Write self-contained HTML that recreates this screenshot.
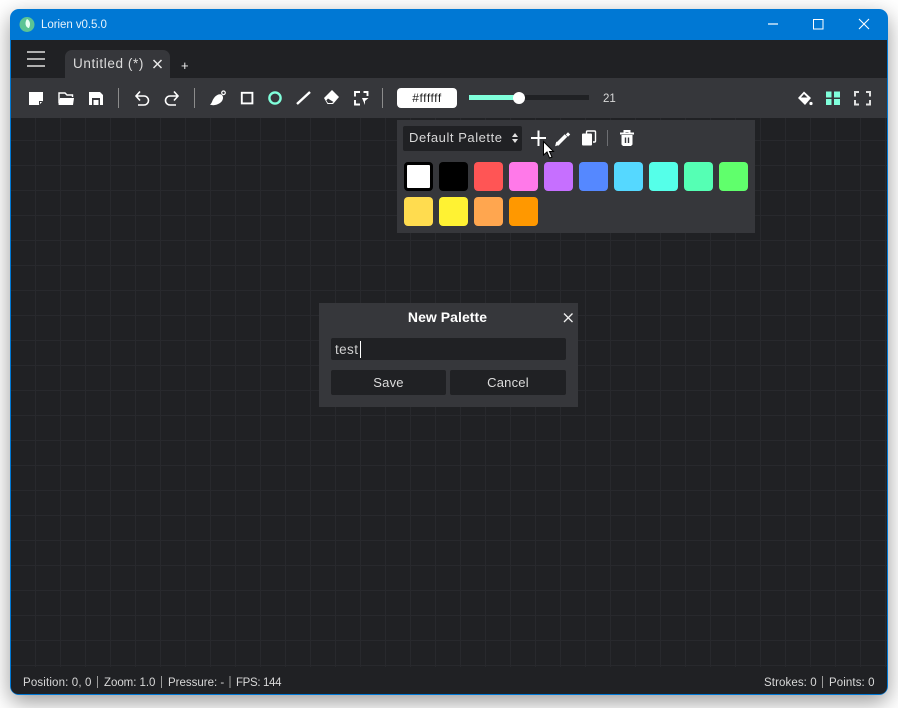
<!DOCTYPE html>
<html><head><meta charset="utf-8"><style>
html,body{margin:0;padding:0;width:898px;height:708px;overflow:hidden;background:#fff;font-family:"Liberation Sans",sans-serif}
.a{position:absolute;white-space:nowrap}
#win{position:absolute;left:10px;top:9px;width:878px;height:686px;border-radius:9px;box-shadow:0 7px 22px rgba(0,0,0,.4);background:#0078d4}
#in{position:absolute;left:11px;top:40px;width:876px;height:654px;background:#202124;border-radius:0 0 7px 7px;overflow:hidden}
.t{color:#d8d8d8;font-size:11.5px;line-height:14px}
.sw{position:absolute;width:29px;height:29px;border-radius:4px}
</style></head><body>
<div id="win"></div>
<div id="in"></div>
<svg class="a" style="left:11px;top:118px" width="876" height="549"><defs><pattern id="g" x="24" y="-3" width="25" height="25" patternUnits="userSpaceOnUse"><path d="M.5 0V25M0 .5H25" stroke="#28292d" fill="none"/></pattern></defs><rect width="876" height="549" fill="url(#g)"/></svg>
<div class="a" style="left:11px;top:78px;width:876px;height:40px;background:#36373b"></div>
<div class="a" style="left:65px;top:50px;width:105px;height:28px;background:#36373b;border-radius:7px 7px 0 0"></div>
<div class="a" style="left:41px;top:17px;color:#e6f2fb;font-size:11.5px;line-height:16px;letter-spacing:-.05px">Lorien v0.5.0</div>
<div class="a" style="left:73px;top:55px;color:#dcdcdc;font-size:13.5px;line-height:17px;letter-spacing:.6px">Untitled (*)</div>
<div class="a" style="left:181px;top:58px;color:#f0f0f0;font-size:13px;line-height:16px">+</div>
<div class="a" style="left:397px;top:88px;width:60px;height:20px;background:#fff;border-radius:4px;color:#222;font-size:12px;line-height:20px;text-align:center;letter-spacing:.55px">#ffffff</div>
<div class="a" style="left:469px;top:95px;width:120px;height:5px;background:#202124"></div>
<div class="a" style="left:469px;top:95px;width:50px;height:5px;background:#80ffdb"></div>
<div class="a" style="left:513px;top:92px;width:12px;height:12px;background:#fff;border-radius:50%"></div>
<div class="a t" style="left:603px;top:92px">21</div>
<div class="a" style="left:397px;top:120px;width:358px;height:113px;background:#36373b"></div>
<div class="a" style="left:403px;top:126px;width:119px;height:25px;background:#202124;border-radius:2px"></div>
<div class="a" style="left:409px;top:130px;color:#d8d8d8;font-size:13px;line-height:16px;letter-spacing:.55px">Default Palette</div>
<div class="sw" style="left:404px;top:162px;background:#fff;border:3px solid #000;box-sizing:border-box"></div>
<div class="sw" style="left:439px;top:162px;background:#000"></div>
<div class="sw" style="left:474px;top:162px;background:#ff5555"></div>
<div class="sw" style="left:509px;top:162px;background:#ff79e9"></div>
<div class="sw" style="left:544px;top:162px;background:#c66fff"></div>
<div class="sw" style="left:579px;top:162px;background:#5588ff"></div>
<div class="sw" style="left:614px;top:162px;background:#55d8ff"></div>
<div class="sw" style="left:649px;top:162px;background:#55ffe9"></div>
<div class="sw" style="left:684px;top:162px;background:#55ffb4"></div>
<div class="sw" style="left:719px;top:162px;background:#60ff6c"></div>
<div class="sw" style="left:404px;top:197px;background:#ffdc4f"></div>
<div class="sw" style="left:439px;top:197px;background:#fff233"></div>
<div class="sw" style="left:474px;top:197px;background:#ffa64f"></div>
<div class="sw" style="left:509px;top:197px;background:#ff9800"></div>
<div class="a" style="left:319px;top:303px;width:259px;height:104px;background:#36373b"></div>
<div class="a" style="left:318px;top:308px;width:259px;text-align:center;color:#fff;font-size:14px;line-height:18px;font-weight:bold;letter-spacing:.05px">New Palette</div>
<div class="a" style="left:331px;top:338px;width:235px;height:22px;background:#202124;border-radius:2px"></div>
<div class="a" style="left:335px;top:341px;color:#cfcfcf;font-size:13.5px;line-height:17px;letter-spacing:.4px">test</div>
<div class="a" style="left:360px;top:341px;width:1px;height:17px;background:#fff"></div>
<div class="a" style="left:331px;top:370px;width:115px;height:25px;background:#202124;color:#dcdcdc;font-size:13px;line-height:25px;text-align:center;border-radius:2px;letter-spacing:.2px">Save</div>
<div class="a" style="left:450px;top:370px;width:116px;height:25px;background:#202124;color:#dcdcdc;font-size:13px;line-height:25px;text-align:center;border-radius:2px;letter-spacing:.2px">Cancel</div>
<div class="a t" style="left:23px;top:676px;letter-spacing:.15px">Position: 0, 0</div>
<div class="a t" style="left:104px;top:676px;letter-spacing:-.05px">Zoom: 1.0</div>
<div class="a t" style="left:168px;top:676px">Pressure: -</div>
<div class="a t" style="left:236px;top:676px;letter-spacing:-.35px">FPS: 144</div>
<div class="a t" style="left:764px;top:676px;letter-spacing:.1px">Strokes: 0</div>
<div class="a t" style="left:829px;top:676px;letter-spacing:.1px">Points: 0</div>
<svg class="a" style="left:0;top:0" width="898" height="708" fill="none">
<circle cx="27" cy="24.500" r="7.500" fill="#5cc494"/><path d="M27 19c3 1.500 4 5 2 9-3 0-5-5-2-9z" fill="#e6fff2"/>
<path d="M768 24H778" stroke="#fff" stroke-width="1.200"/><rect x="813.500" y="19.500" width="9.500" height="9.500" stroke="#fff"/><path d="M859 19l10 10M869 19L859 29" stroke="#fff" stroke-width="1.100"/>
<path d="M27 52H45M27 59H45M27 66H45" stroke="#c4c4c4" stroke-width="1.800"/>
<path d="M153.500 60l8 8M161.500 60l-8 8" stroke="#e8e8e8" stroke-width="1.500"/>
<path d="M29 92H43V101L39 105H29Z" fill="#fff"/><path d="M39 101h4l-4 4z" fill="#36373b"/><path d="M40 102h2l-2 2z" fill="#fff"/>
<path d="M59 103.500V93H65L67 95H72.500V97" stroke="#fff" stroke-width="1.400"/><path d="M60 98H74L73 105H58.500Z" fill="#fff"/>
<path d="M89 92H100L103 95V105H89Z" fill="#fff"/><rect x="92" y="98" width="8" height="7" fill="#36373b"/><rect x="93.500" y="100" width="5" height="5" fill="#fff"/>
<path d="M118.500 88V108M194.500 88V108M382.500 88V108" stroke="#8c8c8c"/>
<path d="M140 91.500l-4 4.500 4 4.500M136 96H144a4.500 4.500 0 0 1 0 9H138" stroke="#fff" stroke-width="1.600"/>
<path d="M174 91.500l4 4.500-4 4.500M178 96H170a4.500 4.500 0 0 0 0 9H176" stroke="#fff" stroke-width="1.600"/>
<path d="M210 104.500c2-1 2-4 4-6.500 2-3 6-5 8-3 2 2 1 6-2 8-3 2-7 3-10 1.500z" fill="#fff"/><circle cx="223.500" cy="92.800" r="1.800" stroke="#fff" stroke-width="1.200"/>
<rect x="241.800" y="92.800" width="10.600" height="10.600" stroke="#fff" stroke-width="1.900"/>
<circle cx="275" cy="98" r="5.600" stroke="#80ffdb" stroke-width="2.400"/>
<path d="M297 104L310 92" stroke="#fff" stroke-width="2.400"/>
<path d="M324 98L332 90L339 97L333 104H327.500Z" fill="#fff"/><path d="M328 98.500L333.500 102L332 103H328L326.300 100.500Z" fill="#36373b"/>
<path d="M360 92H355V96.500M355 100V104.500H360M363.500 92H367.500V96" stroke="#fff" stroke-width="1.900"/><path d="M362 98H368.500L365 101V105Z" fill="#fff"/>
<path d="M515 133l-3 4h6zM515 143l-3-4h6z" fill="#e0e0e0"/>
<path d="M531 138H546M538.500 130.500V146" stroke="#fff" stroke-width="2"/>
<path d="M557 144.500L566 135.500" stroke="#fff" stroke-width="3.600"/><path d="M555.800 145.500l.8-3 2 2zM566.500 134.500l1.500-1.500 1.500 1.500-1.500 1.500z" fill="#fff" stroke="#fff"/>
<rect x="586.500" y="131" width="9" height="11" rx="1" stroke="#fff" stroke-width="1.400"/><rect x="582" y="133.500" width="10" height="12" rx="1" fill="#fff"/><path d="M592.500 133V145.500" stroke="#36373b"/>
<path d="M607.500 130V146" stroke="#6d6e72"/>
<path d="M620 133.500H634M624.500 133V131H629.500V133" stroke="#fff" stroke-width="2"/><path d="M621.500 135H632.500V144.500L631 146H623L621.500 144.500Z" fill="#fff"/><path d="M625.500 137.500V143M628.500 137.500V143" stroke="#36373b" stroke-width="1.400"/>
<path d="M543.500 141.500V155L547 152L549.500 158L552 157L549.500 151.500H553.500Z" fill="#fff" stroke="#000"/>
<path d="M564 313.500l8.500 8.500M572.500 313.500L564 322" stroke="#f0f0f0" stroke-width="1.300"/>
<path d="M798 98L804 91.500L811 98L805 105Z" fill="#fff"/><circle cx="811" cy="103.500" r="1.600" fill="#fff"/><path d="M801 97.500L807.500 97.500L804 94Z" fill="#36373b"/>
<path d="M826 91.500h5.500v6h-5.500zM834 91.500h6v6h-6zM826 99h5.500v6h-5.500zM834 99h6v6h-6z" fill="#80ffdb"/>
<path d="M859 92H855V96.500M866 92H870V96.500M855 100V104.500H859M870 100V104.500H866" stroke="#e0e0e0" stroke-width="2"/>
<path d="M97.500 676V688M161.500 676V688M230 676V688M822.500 676V688" stroke="#9a9a9a"/>
</svg>
</body></html>
